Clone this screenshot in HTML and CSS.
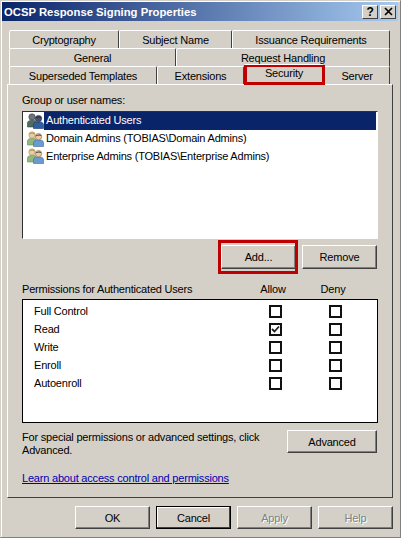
FILE: index.html
```html
<!DOCTYPE html>
<html lang="en">
<head>
<meta charset="utf-8">
<title>OCSP Response Signing Properties</title>
<link rel="stylesheet" href="styles.css">
</head>
<body>
<svg class="defs" width="0" height="0" aria-hidden="true">
  <symbol id="group-dark" viewBox="0 0 17 16">
    <path d="M0.5 14V10C0.5 8.5 2 7.5 3.5 7.5H7C8.5 7.5 9.5 8.5 9.5 10V14Z" fill="#4f6a5e" stroke="#39463f" stroke-width="0.6"/>
    <circle cx="5" cy="4" r="3.2" fill="#6c7480" stroke="#3a3f48" stroke-width="0.6"/>
    <path d="M6.5 15.5V12C6.5 10.2 8 9 9.5 9H13.5C15 9 16.5 10.2 16.5 12V15.5Z" fill="#2f5f9f" stroke="#1f3a68" stroke-width="0.6"/>
    <circle cx="11.5" cy="5.6" r="3.2" fill="#46506a" stroke="#20283c" stroke-width="0.6"/>
    <path d="M8.6 5.4C9 3 14 2.6 14.6 5.2C13 4.2 10.5 4.2 8.6 5.4Z" fill="#1f2a3f"/>
  </symbol>
  <symbol id="group-light" viewBox="0 0 17 16">
    <path d="M0.5 14V10C0.5 8.5 2 7.5 3.5 7.5H7C8.5 7.5 9.5 8.5 9.5 10V14Z" fill="#8fb87a" stroke="#6a8a5a" stroke-width="0.6"/>
    <circle cx="5" cy="4" r="3.2" fill="#e8cf9f" stroke="#a89060" stroke-width="0.6"/>
    <path d="M2 3.6C2.4 1 7.6 0.6 8 3.4C6 2.4 4 2.4 2 3.6Z" fill="#b8975a"/>
    <path d="M6.5 15.5V12C6.5 10.2 8 9 9.5 9H13.5C15 9 16.5 10.2 16.5 12V15.5Z" fill="#6a9bcf" stroke="#3f6a99" stroke-width="0.6"/>
    <circle cx="11.5" cy="5.6" r="3.2" fill="#eec9a0" stroke="#8a6a50" stroke-width="0.6"/>
    <path d="M8.6 5.4C9 3 14 2.6 14.6 5.2C13 4.2 10.5 4.2 8.6 5.4Z" fill="#4a3a2c"/>
  </symbol>
</svg>
<div class="window">
  <header class="titlebar">
    <span class="title">OCSP Response Signing Properties</span>
    <span class="caption-btns">
      <span class="caption-btn">?</span>
      <span class="caption-btn">
        <svg width="9" height="9" viewBox="0 0 9 9"><path d="M1 1L8 8M8 1L1 8" stroke="#000" stroke-width="1.6"/></svg>
      </span>
    </span>
  </header>

  <div class="content">
    <div class="tabs">
      <div class="tab-row">
        <div class="tab tab-crypt">Cryptography</div>
        <div class="tab tab-subject">Subject Name</div>
        <div class="tab tab-issue">Issuance Requirements</div>
      </div>
      <div class="tab-row">
        <div class="tab tab-general">General</div>
        <div class="tab tab-request">Request Handling</div>
      </div>
      <div class="tab-row tab-row-front">
        <div class="tab tab-super">Superseded Templates</div>
        <div class="tab tab-ext">Extensions</div>
        <div class="tab tab-security">Security<span class="highlight highlight-tab"></span></div>
        <div class="tab tab-server">Server</div>
      </div>
    </div>

    <section class="panel">
      <div class="label">Group or user names:</div>
      <ul class="names">
        <li class="name selected"><svg class="gicon"><use href="#group-dark"/></svg><span class="name-text">Authenticated Users</span></li>
        <li class="name"><svg class="gicon"><use href="#group-light"/></svg><span class="name-text">Domain Admins (TOBIAS\Domain Admins)</span></li>
        <li class="name"><svg class="gicon"><use href="#group-light"/></svg><span class="name-text">Enterprise Admins (TOBIAS\Enterprise Admins)</span></li>
      </ul>
      <div class="name-actions">
        <div class="btn btn-add">Add...<span class="highlight highlight-add"></span></div>
        <div class="btn btn-remove">Remove</div>
      </div>

      <div class="perm-head">
        <span class="perm-title">Permissions for Authenticated Users</span>
        <span class="perm-col">Allow</span>
        <span class="perm-col">Deny</span>
      </div>
      <div class="perms">
        <div class="perm"><span class="perm-name">Full Control</span><span class="check"></span><span class="check"></span></div>
        <div class="perm"><span class="perm-name">Read</span><span class="check"><svg width="9" height="9" viewBox="0 0 9 9"><path d="M1 4L3.5 6.5L8 1.5" fill="none" stroke="#222" stroke-width="1.8"/></svg></span><span class="check"></span></div>
        <div class="perm"><span class="perm-name">Write</span><span class="check"></span><span class="check"></span></div>
        <div class="perm"><span class="perm-name">Enroll</span><span class="check"></span><span class="check"></span></div>
        <div class="perm"><span class="perm-name">Autoenroll</span><span class="check"></span><span class="check"></span></div>
      </div>

      <div class="advanced">
        <p class="advanced-text">For special permissions or advanced settings, click Advanced.</p>
        <div class="btn btn-advanced">Advanced</div>
      </div>
      <a class="learn" href="#">Learn about access control and permissions</a>
    </section>

    <footer class="footer">
      <div class="btn btn-foot">OK</div>
      <div class="btn btn-foot btn-default">Cancel</div>
      <div class="btn btn-foot btn-disabled">Apply</div>
      <div class="btn btn-foot btn-disabled">Help</div>
    </footer>
  </div>
</div>
</body>
</html>
```
FILE: styles.css
```css
* { box-sizing: border-box; }
html, body { margin: 0; padding: 0; }
body {
  width: 401px;
  height: 538px;
  background: #d4d0c8;
  font-family: "Liberation Sans", Arial, sans-serif;
  font-size: 11px;
  letter-spacing: -0.2px;
  color: #000;
  overflow: hidden;
}
.defs { position: absolute; }
.window {
  width: 401px;
  height: 538px;
  background: #d4d0c8;
  border: 1px solid #808080;
  border-top-color: #d4d0c8;
  border-left-color: #d4d0c8;
  padding: 1px 2px 0 1px;
  box-shadow: inset 1px 1px 0 #fff;
}
.titlebar {
  height: 19px;
  display: flex;
  align-items: center;
  justify-content: space-between;
  padding: 0 2px 0 2px;
  background: linear-gradient(90deg, #0a246a, #a6caf0);
}
.title { color: #fff; font-weight: bold; font-size: 11.3px; letter-spacing: 0; }
.caption-btns { display: flex; gap: 2px; }
.caption-btn {
  width: 16px;
  height: 14px;
  background: #d4d0c8;
  border: 1px solid;
  border-color: #fff #404040 #404040 #fff;
  display: flex;
  align-items: center;
  justify-content: center;
  font-weight: bold;
  font-size: 12px;
  color: #000;
}
.content { padding: 9px 5px 0 5px; }
.tabs { display: flex; flex-direction: column; padding: 0 0 0 2px; }
.tab-row { display: flex; height: 18px; }
.tab {
  height: 19px;
  display: flex;
  align-items: center;
  justify-content: center;
  background: #d4d0c8;
  border: 1px solid;
  border-color: #fff #404040 transparent #fff;
  border-radius: 2px 2px 0 0;
  position: relative;
}
.tab-crypt { width: 110px; }
.tab-subject { width: 113px; }
.tab-issue { width: 158px; }
.tab-general { width: 167px; }
.tab-request { width: 214px; }
.tab-super { width: 148px; }
.tab-ext { width: 87px; }
.tab-security { width: 80px; height: 20px; margin-top: -2px; z-index: 2; padding-bottom: 3px; }
.tab-server { width: 66px; }
.tab-row-front { height: 18px; }
.highlight {
  position: absolute;
  border: 3px solid #c00000;
  pointer-events: none;
}
.highlight-tab { left: -1px; top: 0; width: 81px; height: 20px; border-width: 2px 3px 3px; }
.highlight-add { left: -4px; top: -6px; width: 80px; height: 34px; }

.panel {
  height: 414px;
  background: #d4d0c8;
  border: 1px solid;
  border-color: #fff #404040 #404040 #fff;
  padding: 9px 13px 0 14px;
  position: relative;
  z-index: 1;
}
.label { height: 17px; line-height: 13px; }
.names {
  list-style: none;
  margin: 0;
  padding: 0 1px;
  height: 128px;
  width: 356px;
  background: #fff;
  border: 1px solid;
  border-color: #303030 #fff #fff #303030;
}
.name { height: 17.5px; display: flex; align-items: center; padding-left: 3px; }
.gicon { width: 17px; height: 16px; flex: none; }
.name-text { padding: 0 2px; height: 17px; line-height: 17px; }
.selected { height: 18px; }
.selected .name-text { flex: 1; height: 18px; background: #0a246a; color: #fff; }
.name-actions { display: flex; gap: 6px; margin: 6px 0 0 199px; }
.btn {
  display: flex;
  align-items: center;
  justify-content: center;
  background: #d4d0c8;
  border: 1px solid;
  border-color: #fff #404040 #404040 #fff;
  box-shadow: inset -1px -1px 0 #808080;
  position: relative;
  flex: none;
}
.btn-add { width: 75px; height: 24px; }
.btn-remove { width: 75px; height: 24px; }
.perm-head { display: flex; align-items: center; height: 14px; margin-top: 13px; }
.perm-title { width: 221px; }
.perm-col { width: 60px; text-align: center; }
.perms {
  margin-top: 3px;
  width: 356px;
  height: 124px;
  background: #fff;
  border: 1px solid #000;
  padding-top: 2px;
}
.perm {
  display: grid;
  grid-template-columns: 235px 60px 13px;
  height: 18px;
  align-items: center;
  padding-left: 11px;
}
.check {
  width: 13px;
  height: 13px;
  border: 2px solid #111;
  background: #fff;
  display: flex;
  align-items: center;
  justify-content: center;
}
.advanced { display: flex; justify-content: space-between; margin-top: 7px; width: 355px; }
.advanced-text { margin: 0; width: 250px; line-height: 13px; padding-top: 1px; }
.btn-advanced { width: 90px; height: 23px; }
.learn { display: block; margin-top: 15px; color: #0000b0; text-decoration: underline; }
.footer { display: flex; justify-content: flex-end; gap: 6px; margin-top: 8px; }
.btn-foot { width: 75px; height: 23px; }
.btn-default { border: 1px solid #000; box-shadow: inset -1px -1px 0 #404040, inset 1px 1px 0 #fff; }
.btn-disabled { color: #808080; text-shadow: 1px 1px 0 #fff; }
```
